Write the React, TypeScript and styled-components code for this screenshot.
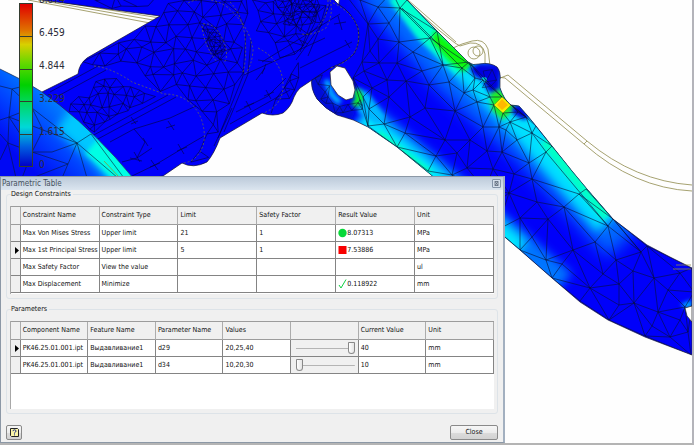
import React, { useState } from "react";
import styled, { createGlobalStyle } from "styled-components";

const GlobalStyle = createGlobalStyle`
  *, *::before, *::after { box-sizing: border-box; }
  body {
    margin: 0;
    background: #fff;
    font-family: "DejaVu Sans Condensed", "DejaVu Sans", sans-serif;
    font-size: 7px;
    line-height: 9px;
    color: #101010;
  }
`;

/* ---------- mesh generation ---------- */

type Pt = [number, number];

/* Bowyer-Watson triangulation, returned as one path of unique edges. */
function meshPath(pts: Pt[], maxEdge: number): string {
  const all: Pt[] = [...pts, [-3000, -3000], [4000, -3000], [300, 5000]];
  const n = pts.length;
  let tris: number[][] = [[n, n + 1, n + 2]];
  const inCircle = (t: number[], p: Pt) => {
    const [ax, ay] = all[t[0]];
    const [bx, by] = all[t[1]];
    const [cx, cy] = all[t[2]];
    const d = 2 * (ax * (by - cy) + bx * (cy - ay) + cx * (ay - by));
    if (Math.abs(d) < 1e-9) return true;
    const a2 = ax * ax + ay * ay;
    const b2 = bx * bx + by * by;
    const c2 = cx * cx + cy * cy;
    const ux = (a2 * (by - cy) + b2 * (cy - ay) + c2 * (ay - by)) / d;
    const uy = (a2 * (cx - bx) + b2 * (ax - cx) + c2 * (bx - ax)) / d;
    return (p[0] - ux) ** 2 + (p[1] - uy) ** 2 < (ax - ux) ** 2 + (ay - uy) ** 2;
  };
  for (let i = 0; i < n; i++) {
    const bad = tris.filter((t) => inCircle(t, all[i]));
    const count = new Map<string, number[]>();
    bad.forEach((t) =>
      [[t[0], t[1]], [t[1], t[2]], [t[2], t[0]]].forEach(([a, b]) => {
        const key = a < b ? a + "_" + b : b + "_" + a;
        if (count.has(key)) count.set(key, []);
        else count.set(key, [a, b]);
      })
    );
    tris = tris.filter((t) => !bad.includes(t));
    count.forEach((e) => {
      if (e.length) tris.push([e[0], e[1], i]);
    });
  }
  const edges = new Set<string>();
  tris.forEach((t) =>
    [[t[0], t[1]], [t[1], t[2]], [t[2], t[0]]].forEach(([a, b]) => {
      if (a >= n || b >= n) return;
      const [p, q] = [all[Math.min(a, b)], all[Math.max(a, b)]];
      if (Math.hypot(p[0] - q[0], p[1] - q[1]) > maxEdge) return;
      edges.add(`M${p[0]} ${p[1]}L${q[0]} ${q[1]}`);
    })
  );
  return [...edges].join("");
}

function inside(poly: Pt[], x: number, y: number): boolean {
  let hit = false;
  for (let i = 0, j = poly.length - 1; i < poly.length; j = i++) {
    const [xi, yi] = poly[i];
    const [xj, yj] = poly[j];
    if (yi > y !== yj > y && x < ((xj - xi) * (y - yi)) / (yj - yi) + xi) hit = !hit;
  }
  return hit;
}

/* Jittered hexagonal point set inside a polygon. */
function scatter(poly: Pt[], step: number, seed: number): Pt[] {
  let s = seed;
  const rnd = () => {
    s = (s * 1103515245 + 12345) % 2147483648;
    return s / 2147483648 - 0.5;
  };
  const xs = poly.map((p) => p[0]);
  const ys = poly.map((p) => p[1]);
  const out: Pt[] = [];
  let row = 0;
  for (let y = Math.min(...ys); y <= Math.max(...ys); y += step * 0.87, row++) {
    for (let x = Math.min(...xs) + (row % 2) * step * 0.5; x <= Math.max(...xs); x += step) {
      const px = Math.round((x + rnd() * step * 0.6) * 10) / 10;
      const py = Math.round((y + rnd() * step * 0.6) * 10) / 10;
      if (inside(poly, px, py)) out.push([px, py]);
    }
  }
  return out;
}

const limbPoints: Pt[] = [
  [345, -6], [360, 0], [378, 7], [400, 8], [392, -8], [407, 0], [368, 24], [389, 23], [399, 42], [378, 39],
  [430, 38], [413, 52], [370, 51], [443, 65], [462, 68], [397, 63], [379, 63], [387, 80], [362, 62], [364, 71],
  [422, 71], [449, 82], [406, 81], [429, 85], [389, 97], [372, 88], [410, 117], [425, 108], [455, 111],
  [369, 109], [368, 126], [384, 124], [405, 133], [397, 147], [436, 156], [445, 140], [428, 171], [457, 153],
  [452, 175], [353, 78], [363, 97], [464, 93], [437, 31], [469, 62], [473, 90], [477, 102], [483, 127],
  [470, 140], [467, 168], [487, 151], [502, 152], [517, 140], [529, 163], [514, 174], [493, 169], [546, 152],
  [532, 179], [552, 146], [509, 193], [537, 202], [564, 207], [548, 219], [520, 218], [579, 194], [532, 133],
  [536, 126], [494, 105], [502, 97], [511, 105], [503, 113], [510, 122], [506, 130], [499, 127],
  [518, 112], [526, 117], [483, 80], [490, 97], [475, 78], [586, 189], [608, 226], [613, 219],
  [532, 237], [573, 250], [595, 242], [641, 252], [616, 260], [520, 250], [546, 260], [562, 264],
  [633, 271], [552, 278], [603, 274], [654, 278], [680, 273], [619, 284], [590, 288], [668, 290], [634, 303],
  [619, 305], [658, 312], [685, 307], [580, 301], [609, 320], [652, 326], [680, 320], [645, 336], [670, 337],
  [688, 332], [691, 355], [647, 246], [692, 268], [694, 292], [485, 190], [480, 215], [497, 230],
];
const earPoints = scatter([[312, 78], [328, 70], [334, 100], [350, 102], [362, 92], [364, 112], [338, 116], [320, 104]], 8, 5);
const hubPoints = scatter([[468, 68], [480, 64], [499, 70], [498, 88], [492, 94], [482, 88]], 9, 11);
const plate: Pt[] = [
  [80, 62], [160, 15], [150, -10], [250, -10], [246, 40], [244, 75], [218, 140], [206, 164], [188, 162],
  [204, 130], [196, 108], [166, 94], [100, 66], [80, 76],
];
const limbMesh = meshPath(limbPoints, 52);
const earMesh = meshPath(earPoints, 13);
const hubMesh = meshPath(hubPoints, 15);
const plateMesh = meshPath(scatter(plate, 14, 7), 22);
const stripMesh = meshPath(scatter([[40, -8], [165, -8], [165, 18], [40, 2]], 15, 3), 24);
const shaftMesh = meshPath(scatter([[78, 95], [104, 70], [166, 94], [92, 134], [62, 106]], 10, 21), 16);
const boreMesh = meshPath(scatter([[201, 24], [212, 24], [224, 40], [227, 58], [219, 61], [206, 46]], 5, 9), 8);
const headMesh = meshPath(scatter([[246, -8], [330, -8], [324, 22], [305, 52], [285, 62], [255, 40]], 12, 17), 18);
const coreMesh = meshPath(scatter([[272, -6], [322, -6], [318, 22], [300, 34], [282, 24]], 7, 13), 11);
const footMesh = meshPath(scatter([[280, 62], [304, 60], [298, 90], [290, 106], [272, 114], [264, 112], [284, 90]], 12, 31), 18);

const LIMB =
  "M340 -4H404L407 0L437 31L468 62Q473 66 479 64Q490 62 497 67Q501 72 500 80L500 88Q504 100 511 105L519 106L527 115L536 126L552 146L572 171L587 189L613 219L647 245L670 257L692 268V355L645 337L608 320L580 302L552 278L520 250L500 233L430 174L397 147L368 127Q354 119 337 115Q324 108 317 99Q310 88 312 78L330 60Z";
const BODY =
  "M42 0L160 16L87 58Q79 64 78 74L42 92L130 180L163 176L182 163Q193 169 207 162Q214 154 220 138L230 132L262 113Q273 117 283 113Q291 107 294 97Q296 92 300 88L330 68Q346 62 354 54Q361 42 358 28Q352 12 338 4L330 -4H42Z";
const DISC = "M0 69Q22 79 42 92Q78 117 115 157L133 178H0Z";

function StressScene() {
  return (
    <Scene viewBox="0 0 694 445" preserveAspectRatio="xMinYMin slice" role="img" aria-label="Stress analysis model">
      <defs>
        <clipPath id="limb"><path d={LIMB} /></clipPath>
        <clipPath id="body"><path d={BODY} /></clipPath>
        <clipPath id="disc"><path d={DISC} /></clipPath>
        <filter id="soft12" x="-30%" y="-30%" width="160%" height="160%"><feGaussianBlur stdDeviation="8" /></filter>
        <filter id="soft6" x="-30%" y="-30%" width="160%" height="160%"><feGaussianBlur stdDeviation="5" /></filter>
        <filter id="soft3" x="-60%" y="-60%" width="220%" height="220%"><feGaussianBlur stdDeviation="2" /></filter>
        <linearGradient id="discFill" gradientUnits="userSpaceOnUse" x1="12" y1="152" x2="62" y2="98">
          <stop offset="0" stopColor="#0008f4" />
          <stop offset="0.45" stopColor="#0040ff" />
          <stop offset="1" stopColor="#0088ff" />
        </linearGradient>
      </defs>

      <g fill="none" stroke="#8f8a4c" strokeWidth="0.8">
        <path d="M28 0L150 23M38 0L153 20M47 0L160 18" />
        <path d="M405 0L440 31L455 43M408 0L456 42M453 48L462 44L472 41Q484 38 488 49L490 66M455 43L460 46L470 43Q483 42 485 54L485 68" />
        <circle cx="474" cy="53" r="6" />
        <circle cx="478" cy="51" r="5" />
        <path d="M495 80L508 75L587 141Q635 181 692 185M497 77L505 78L584 144Q634 188 692 191M584 144L587 141" />
      </g>

      <g clipPath="url(#limb)">
        <rect x="300" y="-5" width="400" height="370" fill="#0000fa" />
        <path d="M376 -20L450 66L534 142L626 240" fill="none" stroke="#0068ff" strokeWidth="50" filter="url(#soft12)" />
        <path d="M394 -20L460 60L528 130L608 222" fill="none" stroke="#00e0ff" strokeWidth="30" filter="url(#soft6)" />
        <path d="M398 -5L424 30L464 68" fill="none" stroke="#00ffd0" strokeWidth="20" filter="url(#soft3)" />
        <path d="M545 140L608 216" fill="none" stroke="#00ffc8" strokeWidth="13" filter="url(#soft3)" />
        <path d="M434 30L474 62L464 72L450 62L432 42Z" fill="#08f808" filter="url(#soft3)" />
        <path d="M362 118L430 174L515 247L560 287" fill="none" stroke="#0074ff" strokeWidth="36" filter="url(#soft6)" />
        <path d="M362 118L430 174L520 250" fill="none" stroke="#00e8ff" strokeWidth="21" filter="url(#soft6)" />
        <path d="M378 134L430 174" fill="none" stroke="#00ffc0" strokeWidth="8" filter="url(#soft3)" />
        <path d="M356 88L368 92L386 118L376 124L358 112Z" fill="#00b8ff" filter="url(#soft3)" />
        <path d="M312 72L322 104L352 118" fill="none" stroke="#0010d8" strokeWidth="14" filter="url(#soft3)" />
        <path d="M326 80L332 95L340 103" fill="none" stroke="#00b0ff" strokeWidth="6" filter="url(#soft3)" />
        <path d="M356 90L360 98L354 106" fill="none" stroke="#10f020" strokeWidth="7" filter="url(#soft3)" />
        <path d="M469 68L480 63L500 66V88L497 96L488 91L482 80L474 76Z" fill="#0000e0" filter="url(#soft3)" />
        <circle cx="484" cy="80" r="3" fill="#00c8e8" />
        <path d="M490 94L499 89L517 106L503 120L492 110Z" fill="#20f020" filter="url(#soft3)" />
        <path d="M512 107L520 104L530 116L524 120L513 114Z" fill="#0000d8" filter="url(#soft3)" />
        <path d="M681 304L692 300V308H684Z" fill="#00b0ff" filter="url(#soft3)" />
        <path d={limbMesh} fill="none" stroke="#081038" strokeWidth="0.6" />
        <path d="M502 97L511 105L503 113L494 105Z" fill="#f4f000" />
        <path d="M502 99L508 105L502 110L497 105Z" fill="#ffb800" />
        <path d={earMesh + hubMesh} fill="none" stroke="#081038" strokeWidth="0.5" />
        <path d="M402 8L462 68M430 38L472 66M546 152L608 226M552 146L641 252" fill="none" stroke="#081038" strokeWidth="0.6" />
      </g>
      <path d={LIMB} fill="none" stroke="#202038" strokeWidth="0.7" />
      <path d="M330 72L337 66L345 68L353 81L355 90L353 98L346 100L338 95L331 85Z" fill="#fff" stroke="#222" strokeWidth="0.7" />
      <path d="M692 306L685 308L687 316L692 322Z" fill="#fff" stroke="#222" strokeWidth="0.7" />
      <path d="M676 265H691M673 269H691" stroke="#8f8a4c" strokeWidth="0.8" />

      <path d={BODY} fill="#0000fa" stroke="#101028" strokeWidth="0.7" />
      <g clipPath="url(#body)" fill="none" stroke="#04043a" strokeWidth="0.6">
        <path d={plateMesh + stripMesh + shaftMesh + headMesh + footMesh} />
        <path d={boreMesh + coreMesh} />
        <path d="M50 92L98 66M58 96L106 70M92 136L168 95M96 140L176 97M110 142L134 129L170 118L196 106M132 176L155 165L180 150L204 136M137 158L145 142L134 129M137 158L122 162M137 158L152 148" />
        <path d="M131 117l5 7M131 124l7-3M168 121l6 9M166 128l9-3M143 138l5 8M134 152l6 10M130 158l12 3M178 144l6 10M177 151l10-4M151 160l7 10M150 167l10-4" />
        <path d="M224 132L248 74L251 40M218 138L243 76L246 32M214 146L232 108" />
        <path d="M230 124L290 90M236 112L268 96L286 78M258 60L272 62M262 74L266 64M256 80L265 68M246 101l5 9M244 107l10-4M266 90l5 9M264 96l10-4" />
        <path d="M244 75L325 38M262 62L340 14M296 60L322 24M300 68L352 42M318 4L300 52M330 4L308 56M338 16l4 14M334 24l12-2M345 40l5 8M300 40l8 4" />
      </g>
      <g fill="none" stroke="#77733c" strokeWidth="0.7" strokeDasharray="2 2">
        <path d="M94 66Q112 68 132 82L164 94Q190 94 201 118Q210 144 195 158Q189 163 182 163" />
        <path d="M188 3Q205 -6 226 6Q250 26 253 50Q252 66 245 74" />
        <path d="M230 2Q243 16 245 38Q247 58 243 72" />
        <path d="M203 24Q214 22 222 38Q230 54 224 63M202 26Q204 46 217 62" />
        <path d="M258 48Q282 60 283 84Q284 104 264 113" />
        <path d="M333 3Q352 12 358 28Q361 48 350 57Q344 64 330 68M328 0Q328 18 318 26M330 0Q334 14 326 28Q312 36 302 34" />
      </g>

      <path d={DISC} fill="url(#discFill)" />
      <g clipPath="url(#disc)">
        <path d="M66 116Q92 136 136 184" fill="none" stroke="#00c8ff" strokeWidth="34" filter="url(#soft6)" />
        <path d="M92 146Q106 158 128 182" fill="none" stroke="#00ffe4" strokeWidth="20" filter="url(#soft3)" />
        <path
          d="M0 86L12 89L32 84M12 89L9 117L0 120M12 89L32 108L77 143M9 117L32 108M9 117L8 143L0 134M9 117L43 130L32 108M8 143L32 152L43 130L77 143L52 152L32 152M9 117L32 152L22 178M8 143L0 160M8 143L16 178M32 152L68 164L77 143L87 178M77 143L91 134M77 143L118 178M91 134L124 178M68 164L62 178M68 164L32 178"
          fill="none"
          stroke="#0a1838"
          strokeWidth="0.6"
        />
        <path d="M104 161L120 178" stroke="#8a9a30" strokeWidth="0.8" />
      </g>
      <path d="M0 69Q22 79 42 92Q78 117 115 157L133 178" fill="none" stroke="#223" strokeWidth="0.6" />
    </Scene>
  );
}

/* ---------- layout ---------- */

const Stage = styled.main`
  position: relative;
  display: grid;
  grid-template-columns: 505fr 189fr;
  align-items: end;
  min-height: 100vh;
  padding-bottom: 2px;
  overflow: hidden;
  background: #fefefe;
`;

const Scene = styled.svg`
  position: absolute;
  inset: 0;
  width: 100%;
  height: 100%;
`;

const StageFrame = styled.div`
  position: absolute;
  inset: 0;
  border-right: 2px solid #b4b4ba;
  border-bottom: 2px solid #b4b4b4;
  pointer-events: none;
`;

const ColorScale = styled.div`
  position: absolute;
  top: 3px;
  left: 19px;
  display: flex;
  gap: 6px;
`;

const ScaleBar = styled.div`
  display: grid;
  grid-template-rows: repeat(5, 1fr);
  width: 14px;
  height: 164px;
  border: 1px solid #333c30;
  background: linear-gradient(#e00000, #e07000 16%, #d8d000 25%, #60d800 37%, #00d000 50%, #00d860 61%, #00d8d8 76%, #0060e0 88%, #0000c8);
`;

const ScaleStep = styled.span`
  & + & { border-top: 1px solid #333c30; }
`;

const ScaleLabels = styled.ul`
  margin: -20px 0 0;
  padding: 0;
  list-style: none;
  font-size: 10px;
  line-height: 33px;
  color: #2c2c38;
`;

const Dialog = styled.section`
  position: relative;
  min-width: 0;
  padding: 0 5px 2px;
  border: 1px solid #8c98a6;
  border-right: 2px solid #a3b0c0;
  background: #f0f0f0;
`;

const TitleBar = styled.header`
  display: flex;
  align-items: center;
  justify-content: space-between;
  height: 13px;
  margin: 0 -5px;
  padding: 0 2px 0 1px;
  background: linear-gradient(#bccada, #dbe5ef);
`;

const Title = styled.h1`
  margin: 0;
  font-size: 8px;
  font-weight: 400;
  color: #46525e;
`;

const TitleButton = styled.button`
  display: grid;
  place-items: center;
  width: 9px;
  height: 9px;
  padding: 0;
  border: 1px solid #8494a8;
  border-radius: 1px;
  background: #d4deea;
`;

const Group = styled.fieldset`
  min-width: 0;
  margin: 0 0 6px;
  padding: 7px 3px 4px;
  border: 1px solid #dde3e8;
  border-radius: 3px;
`;

const GroupTitle = styled.legend`
  margin-left: 1px;
  padding: 0 2px 0 0;
`;

const ListBox = styled.div`
  min-height: 88px;
  border-left: 1px solid #a8a8a8;
  background: #fff;
`;

const Grid = styled.table`
  width: 100%;
  table-layout: fixed;
  border-collapse: separate;
  border-spacing: 0;
  border-top: 1px solid #9c9c9c;
`;

const MarkerCol = styled.col`
  width: 2%;
`;

const HeadCell = styled.th`
  height: 18px;
  padding: 0 0 0 2px;
  overflow: hidden;
  border-right: 1px solid #acacac;
  border-bottom: 1px solid #9c9c9c;
  background: #f0f0f0;
  font-weight: 400;
  text-align: left;
  white-space: nowrap;
`;

const Cell = styled.td<{ $shaded?: boolean }>`
  height: 17px;
  padding: 0 0 0 2px;
  overflow: hidden;
  border-right: 1px solid #848484;
  border-bottom: 1px solid #848484;
  background: ${(p) => (p.$shaded ? "#f0f0f0" : "#fff")};
  white-space: nowrap;
`;

const Result = styled.span`
  display: flex;
  align-items: center;
`;

const Icon = styled.svg`
  display: block;
  flex: none;
`;

const Slider = styled.input`
  display: block;
  width: calc(100% - 6px);
  height: 13px;
  margin: 0 0 0 3px;
  appearance: none;
  background: linear-gradient(#b4b4b4, #b4b4b4) center / 100% 1px no-repeat;

  &::-webkit-slider-thumb {
    appearance: none;
    width: 7px;
    height: 12px;
    border: 1px solid #888;
    border-radius: 1px 1px 4px 4px;
    background: linear-gradient(90deg, #fff, #e4e4e4);
  }
`;

const Footer = styled.footer`
  display: flex;
  align-items: center;
  justify-content: space-between;
  margin-top: 11px;
`;

const PushButton = styled.button<{ $wide?: boolean }>`
  display: grid;
  place-items: center;
  width: ${(p) => (p.$wide ? "48px" : "16px")};
  height: 15px;
  padding: 0;
  border: 1px solid #8a8a8a;
  border-radius: 2px;
  background: linear-gradient(#f6f6f6, #ececec 50%, #dcdcdc 50%, #d2d2d2);
  font: inherit;
  color: inherit;
`;

/* ---------- data ---------- */

type Status = "ok" | "fail" | "check";

const scale = ["8.074", "6.459", "4.844", "3.229", "1.615", "0"];

const constraints: { name: string; type: string; limit: string; factor: string; status?: Status; result: string; unit: string }[] = [
  { name: "Max Von Mises Stress", type: "Upper limit", limit: "21", factor: "1", status: "ok", result: "8.07313", unit: "MPa" },
  { name: "Max 1st Principal Stress", type: "Upper limit", limit: "5", factor: "1", status: "fail", result: "7.53886", unit: "MPa" },
  { name: "Max Safety Factor", type: "View the value", limit: "", factor: "", result: "", unit: "ul" },
  { name: "Max Displacement", type: "Minimize", limit: "", factor: "", status: "check", result: "0.118922", unit: "mm" },
];

const parameters = [
  { component: "PK46.25.01.001.ipt", feature: "Выдавливание1", name: "d29", values: [20, 25, 40], current: 2 },
  { component: "PK46.25.01.001.ipt", feature: "Выдавливание1", name: "d34", values: [10, 20, 30], current: 0 },
];

function StatusIcon({ status }: { status: Status }) {
  return (
    <Icon width="9" height="10" viewBox="0 0 9 10" aria-hidden="true">
      {status === "ok" && <circle cx="4.5" cy="5" r="4.2" fill="#08d838" />}
      {status === "fail" && <rect x="0.5" y="1" width="8" height="8" fill="#f80000" />}
      {status === "check" && <path d="M1 6L3 9L8 0.5" fill="none" stroke="#10d040" strokeWidth="1" />}
    </Icon>
  );
}

function Marker() {
  return (
    <Icon width="7" height="7" viewBox="0 0 7 7" role="img" aria-label="Current row">
      <path d="M2 0L6 3.5L2 7Z" fill="#000" />
    </Icon>
  );
}

export default function App() {
  const [steps, setSteps] = useState(parameters.map((p) => p.current));
  return (
    <>
      <GlobalStyle />
      <Stage>
        <StressScene />
        <ColorScale>
          <ScaleBar>{scale.slice(1).map((s) => <ScaleStep key={s} />)}</ScaleBar>
          <ScaleLabels>{scale.map((s) => <li key={s}>{s}</li>)}</ScaleLabels>
        </ColorScale>
        <StageFrame />
        <Dialog aria-labelledby="dialog-title">
          <TitleBar>
            <Title id="dialog-title">Parametric Table</Title>
            <TitleButton type="button" aria-label="Close window">
              <Icon width="5" height="5" viewBox="0 0 5 5">
                <path d="M1 0.5H4V4.5H1ZM1 0.5L4 4.5M4 0.5L1 4.5" fill="none" stroke="#5c6878" strokeWidth="0.8" />
              </Icon>
            </TitleButton>
          </TitleBar>
          <Group>
            <GroupTitle>Design Constraints</GroupTitle>
            <ListBox>
              <Grid>
                <colgroup><MarkerCol /></colgroup>
                <thead>
                  <tr>
                    <HeadCell />
                    {["Constraint Name", "Constraint Type", "Limit", "Safety Factor", "Result Value", "Unit"].map((h) => (
                      <HeadCell key={h} scope="col">{h}</HeadCell>
                    ))}
                  </tr>
                </thead>
                <tbody>
                  {constraints.map((c, i) => (
                    <tr key={c.name}>
                      <Cell $shaded>{i === 1 && <Marker />}</Cell>
                      <Cell>{c.name}</Cell>
                      <Cell>{c.type}</Cell>
                      <Cell>{c.limit}</Cell>
                      <Cell>{c.factor}</Cell>
                      <Cell><Result>{c.status && <StatusIcon status={c.status} />}{c.result}</Result></Cell>
                      <Cell>{c.unit}</Cell>
                    </tr>
                  ))}
                </tbody>
              </Grid>
            </ListBox>
          </Group>
          <Group>
            <GroupTitle>Parameters</GroupTitle>
            <ListBox>
              <Grid>
                <colgroup><MarkerCol /></colgroup>
                <thead>
                  <tr>
                    <HeadCell />
                    {["Component Name", "Feature Name", "Parameter Name", "Values", "", "Current Value", "Unit"].map((h) => (
                      <HeadCell key={h} scope="col">{h}</HeadCell>
                    ))}
                  </tr>
                </thead>
                <tbody>
                  {parameters.map((p, i) => (
                    <tr key={p.name}>
                      <Cell $shaded>{i === 0 && <Marker />}</Cell>
                      <Cell>{p.component}</Cell>
                      <Cell>{p.feature}</Cell>
                      <Cell>{p.name}</Cell>
                      <Cell>{p.values.join(",")}</Cell>
                      <Cell $shaded>
                        <Slider
                          type="range"
                          min={0}
                          max={2}
                          value={steps[i]}
                          aria-label={p.name}
                          onChange={(e) => setSteps(steps.map((s, k) => (k === i ? Number(e.target.value) : s)))}
                        />
                      </Cell>
                      <Cell>{p.values[steps[i]]}</Cell>
                      <Cell>mm</Cell>
                    </tr>
                  ))}
                </tbody>
              </Grid>
            </ListBox>
          </Group>
          <Footer>
            <PushButton type="button" aria-label="Help">
              <Icon width="11" height="11" viewBox="0 0 11 11">
                <path d="M1.5 1.5H8.5L9.5 2.5V9.5H2.5L1.5 8.5Z" fill="#fbf6a8" stroke="#222" strokeWidth="1" />
                <path d="M4 4.2Q4 2.8 5.5 2.8Q7 2.8 7 4.1Q7 5 5.5 5.8V6.6M5.5 7.4V8.4" fill="none" stroke="#1c2c80" strokeWidth="1" />
              </Icon>
            </PushButton>
            <PushButton type="button" $wide>Close</PushButton>
          </Footer>
        </Dialog>
      </Stage>
    </>
  );
}
